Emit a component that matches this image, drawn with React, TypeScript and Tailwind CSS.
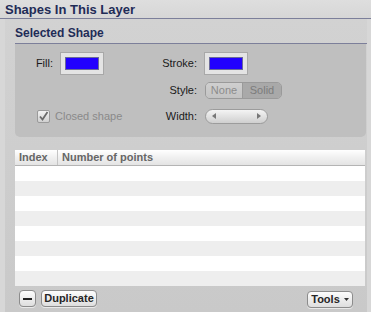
import React from "react";

const font = { fontFamily: '"Liberation Sans", Arial, sans-serif' };

const Swatch: React.FC = () => (
  <div className="w-[44px] h-[23px] border border-[#a8a8a8] bg-[#e4e4e4] p-[4px]">
    <div className="w-full h-full bg-[#2200ff] border border-[#6a6a9a]" />
  </div>
);

const Button: React.FC<{ children: React.ReactNode; className?: string }> = ({ children, className = "" }) => (
  <button
    className={`h-[17px] rounded-[4px] border border-[#8c8c8c] bg-gradient-to-b from-[#fdfdfd] to-[#dedede] text-[11px] font-bold text-[#262626] leading-none flex items-center justify-center shadow-[0_1px_0_rgba(255,255,255,0.6)] ${className}`}
  >
    {children}
  </button>
);

const App: React.FC = () => {
  const rows = Array.from({ length: 8 }, (_, i) => i);

  return (
    <div className="w-[371px] h-[312px] bg-[#d7d7d7] flex flex-col overflow-hidden" style={font}>
      {/* top header */}
      <div className="h-[19px] bg-gradient-to-b from-[#dedede] to-[#d6d6d6] border-b border-[#7c7f9a] pl-[5px] flex items-center">
        <span className="text-[13px] font-bold text-[#1f2c57] leading-none pt-[1px]">Shapes In This Layer</span>
      </div>

      <div className="flex flex-1">
        <div className="ml-[5px] w-[362px] bg-gradient-to-b from-[#d2d2d2] to-[#c9c9c9] flex flex-col">
          {/* section header */}
          <div className="ml-[10px] h-[25px] border-b border-[#7c7f9a] flex items-end pb-[4px]">
            <span className="text-[12px] font-bold text-[#1f2c57] leading-none">Selected Shape</span>
          </div>

          {/* inner box */}
          <div className="ml-[10px] mr-[1px] bg-[#bfbfbf] rounded-b-[5px] pt-[8px] pb-[12px] flex flex-col gap-[7px] text-[11px] text-[#1a1a1a]">
            <div className="flex items-center">
              <div className="w-[38px] text-right">Fill:</div>
              <div className="ml-[7px]">
                <Swatch />
              </div>
              <div className="w-[93px] text-right">Stroke:</div>
              <div className="ml-[7px]">
                <Swatch />
              </div>
            </div>

            <div className="flex items-center">
              <div className="w-[182px] text-right">Style:</div>
              <div className="ml-[8px] flex h-[17px] rounded-[5px] border border-[#9a9a9a] overflow-hidden text-[#8c8c8c]">
                <div className="w-[37px] flex items-center justify-center bg-gradient-to-b from-[#cfcfcf] to-[#c3c3c3] border-r border-[#9a9a9a]">
                  None
                </div>
                <div className="w-[38px] flex items-center justify-center bg-[#a9a9a9] text-[#7c7c7c]">Solid</div>
              </div>
            </div>

            <div className="flex items-center mt-[2px]">
              <div className="w-[140px] pl-[22px] flex items-center gap-[5px] text-[#8a8a8a]">
                <div className="w-[13px] h-[13px] rounded-[2px] border border-[#9a9a9a] bg-gradient-to-b from-[#f2f2f2] to-[#d0d0d0] flex items-center justify-center">
                  <svg width="11" height="11" viewBox="0 0 11 11">
                    <path d="M2 5.5 L4.5 8.5 L9.5 1" stroke="#6a6a6a" strokeWidth="1.8" fill="none" />
                  </svg>
                </div>
                <span>Closed shape</span>
              </div>
              <div className="w-[42px] text-right">Width:</div>
              <div className="ml-[8px] w-[63px] h-[15px] rounded-full border border-[#9c9c9c] bg-gradient-to-b from-[#f4f4f4] to-[#cfcfcf] flex items-center justify-between px-[6px]">
                <svg width="4" height="6" viewBox="0 0 4 6">
                  <path d="M4 0 L0 3 L4 6 Z" fill="#777" />
                </svg>
                <svg width="4" height="6" viewBox="0 0 4 6">
                  <path d="M0 0 L4 3 L0 6 Z" fill="#777" />
                </svg>
              </div>
            </div>
          </div>

          {/* table */}
          <div className="ml-[10px] mt-[13px] w-[350px] bg-white">
            <div className="h-[16px] flex bg-gradient-to-b from-[#ffffff] via-[#f0f0f0] to-[#e4e4e4] border-b border-[#b4b4b4] text-[11px] font-bold text-[#666666]">
              <div className="w-[43px] pl-[4px] border-r border-[#c4c4c4] flex items-center">Index</div>
              <div className="pl-[4px] flex items-center">Number of points</div>
            </div>
            {rows.map((r) => (
              <div key={r} className={`h-[15px] ${r % 2 === 1 ? "bg-[#eeeeee]" : "bg-white"}`} />
            ))}
          </div>

          {/* bottom bar */}
          <div className="ml-[14px] mt-[4px] flex items-center pr-[14px]">
            <Button className="w-[17px]">
              <div className="w-[9px] h-[2px] bg-[#222]" />
            </Button>
            <Button className="ml-[5px] w-[56px]">Duplicate</Button>
            <Button className="ml-auto mt-[1px] w-[46px] gap-[4px]">
              <span>Tools</span>
              <svg width="5" height="3" viewBox="0 0 5 3">
                <path d="M0 0 L5 0 L2.5 3 Z" fill="#333" />
              </svg>
            </Button>
          </div>
        </div>
      </div>
    </div>
  );
};

export default App;
